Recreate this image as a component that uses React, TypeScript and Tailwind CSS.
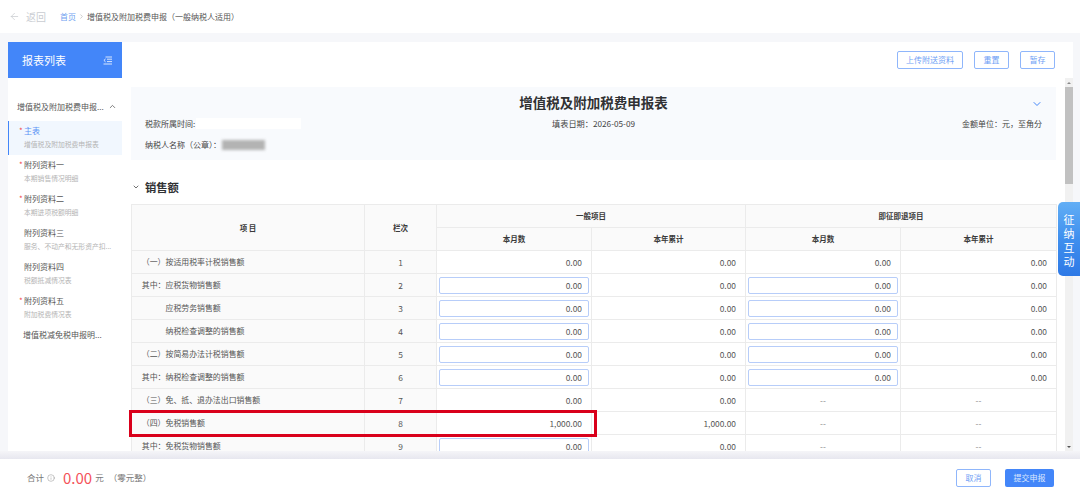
import { ArrowLeft, ChevronDown, ChevronRight, ChevronUp, Info } from "lucide-react";

const FONT = "[font-family:'Noto_Sans_CJK_SC','Noto_Sans',sans-serif]";

type Cell = string | { input: string };

interface Row {
  no: number;
  prefix: string;
  label: string;
  cells: Cell[];
}

const inp = (v: string) => ({ input: v });

const ROWS: Row[] = [
  { no: 1, prefix: "（一）", label: "按适用税率计税销售额", cells: ["0.00", "0.00", "0.00", "0.00"] },
  { no: 2, prefix: "其中：", label: "应税货物销售额", cells: [inp("0.00"), "0.00", inp("0.00"), "0.00"] },
  { no: 3, prefix: "", label: "应税劳务销售额", cells: [inp("0.00"), "0.00", inp("0.00"), "0.00"] },
  { no: 4, prefix: "", label: "纳税检查调整的销售额", cells: [inp("0.00"), "0.00", inp("0.00"), "0.00"] },
  { no: 5, prefix: "（二）", label: "按简易办法计税销售额", cells: [inp("0.00"), "0.00", inp("0.00"), "0.00"] },
  { no: 6, prefix: "其中：", label: "纳税检查调整的销售额", cells: [inp("0.00"), "0.00", inp("0.00"), "0.00"] },
  { no: 7, prefix: "（三）", label: "免、抵、退办法出口销售额", cells: ["0.00", "0.00", "--", "--"] },
  { no: 8, prefix: "（四）", label: "免税销售额", cells: ["1,000.00", "1,000.00", "--", "--"] },
  { no: 9, prefix: "其中：", label: "免税货物销售额", cells: [inp("0.00"), "0.00", "--", "--"] },
];

const NAV = [
  { title: "附列资料一", sub: "本期销售情况明细", req: true },
  { title: "附列资料二", sub: "本期进项税额明细", req: true },
  { title: "附列资料三", sub: "服务、不动产和无形资产扣...", req: false },
  { title: "附列资料四", sub: "税额抵减情况表", req: false },
  { title: "附列资料五", sub: "附加税费情况表", req: true },
];

function CollapseIcon() {
  return (
    <svg width="9" height="9" viewBox="0 0 9 9" fill="none" stroke="white" strokeWidth="0.8">
      <path d="M2.5 1H9M4 3.2H9M4 5.6H9M.5 8H9" />
      <path d="M2.6 2.9 .9 4.4 2.6 5.9" />
    </svg>
  );
}

function OutlineBtn({ children, className }: { children: string; className: string }) {
  return (
    <button className={`h-[18px] rounded-[2px] border border-[#8fb6fb] bg-white text-[8px] text-[#6f9ff5] ${className}`}>
      {children}
    </button>
  );
}

function Th({ children, className = "", ...rest }: React.ThHTMLAttributes<HTMLTableCellElement>) {
  return (
    <th
      {...rest}
      className={`border border-[#ebebeb] bg-[#fafafa] p-0 text-center text-[7.5px] font-bold text-[#3a3a3a] ${className}`}
    >
      {children}
    </th>
  );
}

export default function App() {
  return (
    <div className={`flex h-[496px] w-[1080px] flex-col overflow-hidden bg-[#f6f7fa] ${FONT}`}>
      {/* breadcrumb */}
      <header className="flex h-[33px] shrink-0 items-center bg-white pl-[9px] text-[8px] text-[#555]">
        <ArrowLeft className="h-[11px] w-[11px] text-[#c4c7cc]" strokeWidth={1.5} />
        <span className="ml-[6px] text-[10px] text-[#c9ccd1]">返回</span>
        <span className="ml-[14px] text-[#6f9ff0]">首页</span>
        <ChevronRight className="mx-[2px] h-[7px] w-[7px] text-[#aaa]" />
        <span>增值税及附加税费申报（一般纳税人适用）</span>
      </header>

      <div className="flex min-h-0 flex-1 pl-2 pr-[7px] pt-[9px]">
        {/* sidebar */}
        <aside className="flex w-[114px] shrink-0 flex-col bg-white">
          <div className="flex h-[36px] items-center justify-between bg-[#4386f9] pl-[14px] pr-[10px] text-[11px] text-white">
            <span>报表列表</span>
            <CollapseIcon />
          </div>
          <div className="mt-[21px] flex h-[15px] items-center justify-between pl-[9px] pr-[5px] text-[8px] text-[#555]">
            <span>增值税及附加税费申报...</span>
            <ChevronUp className="h-[9px] w-[9px]" />
          </div>
          <div className="mt-[7px] flex h-[34px] flex-col justify-center border-l border-[#4386f9] bg-[#f1f7fe] pb-[1px] pl-[10px]">
            <div className="flex h-[13px] items-center text-[8px] text-[#5a93f5]">
              <span className="w-[5px] text-[#f0474a]">*</span>主表
            </div>
            <div className="pl-[5px] text-[6.8px] leading-[13px] text-[#b4b4b4]">增值税及附加税费申报表</div>
          </div>
          {NAV.map((n) => (
            <div key={n.title} className="flex h-[34px] flex-col justify-center pb-[1px] pl-[11px]">
              <div className="flex h-[13px] items-center text-[8px] text-[#555]">
                <span className="w-[5px] text-[#f0474a]">{n.req ? "*" : ""}</span>
                {n.title}
              </div>
              <div className="pl-[5px] text-[6.8px] leading-[13px] text-[#b4b4b4]">{n.sub}</div>
            </div>
          ))}
          <div className="flex h-[20px] items-center pl-[15px] text-[8px] text-[#555]">增值税减免税申报明...</div>
        </aside>

        {/* main */}
        <main className="flex min-w-0 flex-1 flex-col bg-white">
          <div className="flex h-[36px] shrink-0 items-center justify-end gap-[11px] pr-[18px]">
            <OutlineBtn className="w-[66px]">上传附送资料</OutlineBtn>
            <OutlineBtn className="w-[35px]">重置</OutlineBtn>
            <OutlineBtn className="w-[35px]">暂存</OutlineBtn>
          </div>

          <div className="flex min-h-0 flex-1 overflow-hidden pl-[9px] pr-0">
            <div className="w-[925px] shrink-0 pt-[9px]">
              {/* form head */}
              <section className="h-[73px] bg-[#f8fafd] px-[14px] text-[8px] text-[#444]">
                <div className="relative pt-[6px] text-center text-[13.5px] font-bold leading-[19px] text-[#303133]">
                  增值税及附加税费申报表
                  <ChevronDown className="absolute right-[-1px] top-[11px] h-[12px] w-[12px] text-[#4386f9]" />
                </div>
                <div className="mt-[6px] flex h-[11px] items-center justify-between">
                  <div className="flex flex-1 items-center">
                    <span>税款所属时间:</span>
                    <span className="ml-[1px] h-[11px] w-[105px] bg-white" />
                  </div>
                  <span className="text-[8.2px]">填表日期：2026-05-09</span>
                  <span className="flex-1 text-right">金额单位：元，至角分</span>
                </div>
                <div className="mt-[10px] flex h-[11px] items-center">
                  <span>纳税人名称（公章）：</span>
                  <span className="ml-[1px] h-[10px] w-[43px] bg-[#b3b3b3] blur-[1.5px]" />
                </div>
              </section>

              <div className="mt-[19px] flex h-[16px] items-center">
                <ChevronDown className="ml-[1px] h-[8px] w-[8px] text-[#555]" strokeWidth={2.5} />
                <h2 className="ml-[5px] text-[11.3px] font-bold text-[#303133]">销售额</h2>
              </div>

              {/* sales table */}
              <div className="relative mt-[9px]">
                <table className="w-[925px] table-fixed border-collapse text-[7.9px] text-[#555]">
                  <colgroup>
                    <col className="w-[233px]" />
                    <col className="w-[72px]" />
                    <col className="w-[155px]" />
                    <col className="w-[154px]" />
                    <col className="w-[155px]" />
                    <col className="w-[156px]" />
                  </colgroup>
                  <thead>
                    <tr className="h-[23px]">
                      <Th rowSpan={2}>项 目</Th>
                      <Th rowSpan={2}>栏次</Th>
                      <Th colSpan={2}>一般项目</Th>
                      <Th colSpan={2}>即征即退项目</Th>
                    </tr>
                    <tr className="h-[23px]">
                      <Th>本月数</Th>
                      <Th>本年累计</Th>
                      <Th>本月数</Th>
                      <Th>本年累计</Th>
                    </tr>
                  </thead>
                  <tbody>
                    {ROWS.map((r) => (
                      <tr key={r.no} className="h-[23px]">
                        <td className="border border-[#ebebeb] bg-[#fafafa] p-0">
                          <div className="flex">
                            <span className="w-[33.5px] text-right">{r.prefix}</span>
                            <span>{r.label}</span>
                          </div>
                        </td>
                        <td className="border border-[#ebebeb] bg-[#fafafa] p-0 text-center text-[8.4px]">{r.no}</td>
                        {r.cells.map((c, i) =>
                          typeof c === "string" ? (
                            <td
                              key={i}
                              className={`border border-[#ebebeb] p-0 text-[8.4px] ${c === "--" ? "text-center text-[#888]" : "pr-[9px] text-right"}`}
                            >
                              {c}
                            </td>
                          ) : (
                            <td key={i} className="border border-[#ebebeb] px-[2px] py-0">
                              <input
                                readOnly
                                value={c.input}
                                className="block h-[17px] w-full rounded-[2px] border border-[#b7cdf9] bg-white pr-[6px] text-right text-[8.4px] text-[#555] outline-none"
                              />
                            </td>
                          ),
                        )}
                      </tr>
                    ))}
                  </tbody>
                </table>
                {/* highlight on the row 8 amount */}
                <div className="absolute left-[-2px] top-[206px] h-[27px] w-[468px] border-[3px] border-[#d9001b]" />
              </div>
            </div>

            {/* scrollbar */}
            <div className="ml-[9px] flex w-[8px] flex-col bg-[#f1f1f1]">
              <div className="flex h-[9px] items-center justify-center">
                <span className="h-0 w-0 border-x-[2px] border-b-[2px] border-x-transparent border-b-[#8a8a8a]" />
              </div>
              <div className="h-[97px] bg-[#c1c1c1]" />
              <div className="flex-1" />
              <div className="flex h-[9px] items-center justify-center">
                <span className="h-0 w-0 border-x-[2px] border-t-[2px] border-x-transparent border-t-[#555]" />
              </div>
            </div>
          </div>
        </main>
      </div>

      {/* band above the footer */}
      <div className="h-[8px] shrink-0 bg-gradient-to-b from-[#f5f5f8] to-[#e7e7ef]" />

      {/* footer */}
      <footer className="flex h-[37px] shrink-0 items-center bg-white pl-[27px] pr-[26px] text-[8.5px] text-[#777]">
        <span>合计</span>
        <Info className="ml-[3px] h-[8px] w-[8px]" strokeWidth={1.2} />
        <span className="ml-[8px] text-[15px] leading-none text-[#f4525a]">0.00</span>
        <span className="ml-[3px]">元</span>
        <span className="ml-[5px]">（零元整）</span>
        <div className="ml-auto flex items-center gap-[14px]">
          <OutlineBtn className="w-[35px]">取消</OutlineBtn>
          <button className="h-[18px] w-[49px] rounded-[2px] bg-[#4386f9] text-[8px] text-[#dbe8fe]">提交申报</button>
        </div>
      </footer>

      {/* floating tab */}
      <div className="absolute left-[1058px] top-[202px] flex h-[74px] w-[22px] flex-col items-center justify-center rounded-l-[5px] bg-gradient-to-b from-[#62aef5] via-[#3f8fee] to-[#2e79e6] pt-[1px] text-[11px] leading-[14px] text-white">
        <span>征</span>
        <span>纳</span>
        <span>互</span>
        <span>动</span>
      </div>
    </div>
  );
}
